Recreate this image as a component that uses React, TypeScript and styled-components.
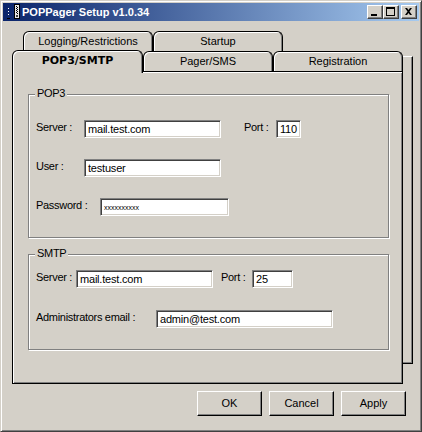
import React from "react";
import styled, { createGlobalStyle } from "styled-components";

const GlobalStyle = createGlobalStyle`
  html, body {
    margin: 0;
    padding: 0;
    background: #d4d0c8;
  }
  body {
    font-family: "Liberation Sans", Arial, sans-serif;
    font-size: 11px;
    letter-spacing: -0.3px;
    color: #000;
  }
`;

const Window = styled.div`
  box-sizing: border-box;
  width: 422px;
  height: 432px;
  padding: 2px;
  background: #d4d0c8;
  border: 1px solid;
  border-color: #d4d0c8 #404040 #404040 #d4d0c8;
  box-shadow: inset 1px 1px #fff, inset -1px -1px #808080;
  display: flex;
  flex-direction: column;
`;

const TitleBar = styled.div`
  height: 18px;
  display: flex;
  align-items: center;
  padding-right: 2px;
  background: linear-gradient(to right, #0a246a, #a6caf0);
`;

const TitleText = styled.div`
  flex: 1;
  padding-left: 1px;
  padding-top: 1px;
  color: #fff;
  font-weight: bold;
  font-size: 11px;
  letter-spacing: 0;
  line-height: 13px;
`;

const TitleButton = styled.div<{ $gap?: number }>`
  box-sizing: border-box;
  width: 16px;
  height: 14px;
  margin-left: ${({ $gap }) => $gap ?? 0}px;
  background: #d4d0c8;
  border: 1px solid;
  border-color: #fff #404040 #404040 #fff;
  box-shadow: inset -1px -1px #808080;
  display: flex;
  svg {
    display: block;
  }
`;

const Content = styled.div`
  padding: 10px 0 0 9px;
  display: flex;
  flex-direction: column;
`;

const TabControl = styled.div`
  display: flex;
  align-items: flex-start;
`;

const TabColumn = styled.div`
  width: 391px;
  display: flex;
  flex-direction: column;
`;

const BackRow = styled.div`
  display: flex;
  height: 20px;
  margin-left: 11px;
`;

const FrontRow = styled.div`
  display: flex;
  align-items: flex-end;
  height: 20px;
  position: relative;
  z-index: 1;
`;

const Tab = styled.div<{ $active?: boolean; $width?: number }>`
  box-sizing: border-box;
  width: ${({ $width }) => $width ?? 130}px;
  height: ${({ $active }) => ($active ? 23 : 20)}px;
  margin-bottom: ${({ $active }) => ($active ? -2 : 0)}px;
  background: #d4d0c8;
  border: 1px solid #000;
  border-bottom: none;
  border-radius: 6px 6px 0 0;
  box-shadow: inset 1px 1px #fff, inset -1px 0 #808080;
  display: flex;
  align-items: center;
  justify-content: center;
  padding-bottom: ${({ $active }) => ($active ? 3 : 0)}px;
  font-family: ${({ $active }) =>
    $active ? '"DejaVu Sans", Verdana, sans-serif' : "inherit"};
  font-weight: ${({ $active }) => ($active ? "bold" : "normal")};
  letter-spacing: 0;
  line-height: 13px;
`;

const Panel = styled.div`
  box-sizing: border-box;
  height: 313px;
  border: 1px solid #000;
  box-shadow: inset 1px 1px #fff, inset -1px -1px #808080;
  padding: 22px 0 0 15px;
  display: flex;
  flex-direction: column;
`;

const BackEdge = styled.div`
  box-sizing: border-box;
  width: 10px;
  height: 308px;
  margin-top: 25px;
  border-top: 1px solid #fff;
  border-right: 1px solid #000;
  border-bottom: 1px solid #000;
  box-shadow: inset -1px -1px #808080;
`;

const Group = styled.div<{ $height: number; $top: number; $gap?: number }>`
  box-sizing: border-box;
  position: relative;
  width: 361px;
  height: ${({ $height }) => $height}px;
  margin-top: ${({ $gap }) => $gap ?? 0}px;
  padding: ${({ $top }) => $top}px 0 0 7px;
  border: 1px solid #808080;
  box-shadow: inset 1px 1px #fff, 1px 1px #fff;
  display: flex;
  flex-direction: column;
`;

const Legend = styled.span`
  position: absolute;
  top: -8px;
  left: 6px;
  padding: 0 2px;
  background: #d4d0c8;
  line-height: 13px;
`;

const Row = styled.div<{ $gap?: number }>`
  display: flex;
  align-items: flex-start;
  height: 18px;
  margin-top: ${({ $gap }) => $gap ?? 0}px;
`;

const Label = styled.div<{ $width: number; $gap?: number }>`
  width: ${({ $width }) => $width}px;
  margin-left: ${({ $gap }) => $gap ?? 0}px;
  padding-top: 1px;
  line-height: 13px;
  white-space: nowrap;
`;

const Field = styled.div<{ $width: number; $small?: boolean }>`
  box-sizing: border-box;
  width: ${({ $width }) => $width}px;
  height: 18px;
  padding: 1px 3px 0;
  background: #fff;
  border: 1px solid;
  border-color: #808080 #fff #fff #808080;
  box-shadow: inset 1px 1px #404040, inset -1px -1px #d4d0c8;
  display: flex;
  align-items: center;
  line-height: 13px;
  white-space: nowrap;
  overflow: hidden;
  font-size: ${({ $small }) => ($small ? 7 : 11)}px;
  letter-spacing: ${({ $small }) => ($small ? 0 : -0.2)}px;
`;

const Caret = styled.span`
  display: inline-block;
  width: 1px;
  height: 13px;
  margin-left: 1px;
  background: #000;
`;

const ButtonRow = styled.div`
  display: flex;
  justify-content: flex-end;
  gap: 7px;
  margin-top: 7px;
  padding-right: 13px;
`;

const Button = styled.div`
  box-sizing: border-box;
  width: 65px;
  height: 25px;
  background: #d4d0c8;
  border: 1px solid;
  border-color: #fff #000 #000 #fff;
  box-shadow: inset -1px -1px #808080;
  display: flex;
  align-items: center;
  justify-content: center;
  line-height: 13px;
  letter-spacing: 0;
`;

function AppIcon() {
  return (
    <svg width="18" height="18" viewBox="0 0 18 18">
      <rect x="5" y="5" width="1" height="1" fill="#fff" />
      <rect x="5" y="8" width="1" height="1" fill="#fff" />
      <rect x="5" y="11" width="1" height="1" fill="#fff" />
      <rect x="4" y="15" width="3" height="1" fill="#000" />
      <rect x="11" y="1" width="6" height="15" fill="#000" />
      <rect x="12" y="2" width="4" height="13" fill="#e8e8e8" />
      <rect x="13" y="3" width="1" height="1" fill="#000" />
      <rect x="14" y="4" width="1" height="1" fill="#000" />
      <rect x="13" y="5" width="1" height="1" fill="#000" />
      <rect x="14" y="6" width="1" height="1" fill="#000" />
      <rect x="13" y="7" width="1" height="1" fill="#000" />
      <rect x="14" y="8" width="1" height="1" fill="#000" />
      <rect x="13" y="9" width="1" height="1" fill="#000" />
      <rect x="14" y="10" width="1" height="1" fill="#000" />
      <rect x="13" y="12" width="2" height="2" fill="#404040" />
    </svg>
  );
}

function MinimizeGlyph() {
  return (
    <svg width="14" height="12" viewBox="0 0 14 12">
      <rect x="3" y="8" width="6" height="2" fill="#000" />
    </svg>
  );
}

function MaximizeGlyph() {
  return (
    <svg width="14" height="12" viewBox="0 0 14 12">
      <rect x="2.5" y="1.5" width="8" height="8" fill="none" stroke="#000" />
      <rect x="2" y="1" width="9" height="2" fill="#000" />
    </svg>
  );
}

function CloseGlyph() {
  return (
    <svg width="14" height="12" viewBox="0 0 14 12">
      <path
        d="M3 2h2l1.5 2 1.5-2h2l-2.5 3.5 2.5 3.5h-2l-1.5-2-1.5 2h-2l2.5-3.5z"
        fill="#000"
      />
    </svg>
  );
}

export default function App() {
  return (
    <>
      <GlobalStyle />
      <Window>
        <TitleBar>
          <AppIcon />
          <TitleText>POPPager Setup v1.0.34</TitleText>
          <TitleButton>
            <MinimizeGlyph />
          </TitleButton>
          <TitleButton>
            <MaximizeGlyph />
          </TitleButton>
          <TitleButton $gap={2}>
            <CloseGlyph />
          </TitleButton>
        </TitleBar>

        <Content>
          <TabControl>
            <TabColumn>
              <BackRow>
                <Tab>Logging/Restrictions</Tab>
                <Tab>Startup</Tab>
              </BackRow>
              <FrontRow>
                <Tab $active $width={131}>
                  POP3/SMTP
                </Tab>
                <Tab>Pager/SMS</Tab>
                <Tab>Registration</Tab>
              </FrontRow>
              <Panel>
                <Group $height={144} $top={25}>
                  <Legend>POP3</Legend>
                  <Row>
                    <Label $width={48}>Server :</Label>
                    <Field $width={137}>mail.test.com</Field>
                    <Label $width={32} $gap={23}>
                      Port :
                    </Label>
                    <Field $width={25}>
                      110
                      <Caret />
                    </Field>
                  </Row>
                  <Row $gap={21}>
                    <Label $width={48}>User :</Label>
                    <Field $width={137}>testuser</Field>
                  </Row>
                  <Row $gap={21}>
                    <Label $width={64}>Password :</Label>
                    <Field $width={129} $small>
                      xxxxxxxxxx
                    </Field>
                  </Row>
                </Group>

                <Group $height={96} $top={15} $gap={16}>
                  <Legend>SMTP</Legend>
                  <Row>
                    <Label $width={40}>Server :</Label>
                    <Field $width={137}>mail.test.com</Field>
                    <Label $width={31} $gap={8}>
                      Port :
                    </Label>
                    <Field $width={41}>25</Field>
                  </Row>
                  <Row $gap={22}>
                    <Label $width={120}>Administrators email :</Label>
                    <Field $width={177}>admin@test.com</Field>
                  </Row>
                </Group>
              </Panel>
            </TabColumn>
            <BackEdge />
          </TabControl>

          <ButtonRow>
            <Button>OK</Button>
            <Button>Cancel</Button>
            <Button>Apply</Button>
          </ButtonRow>
        </Content>
      </Window>
    </>
  );
}
